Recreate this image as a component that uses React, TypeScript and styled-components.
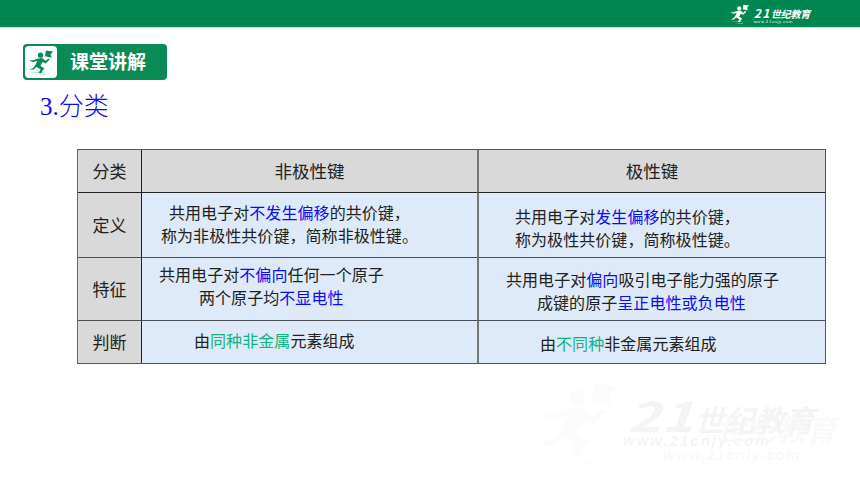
import React from 'react';
import styled, { createGlobalStyle } from 'styled-components';

const Global = createGlobalStyle`
  html, body { margin: 0; padding: 0; background: #fff; }
  body { font-family: "Noto Sans CJK SC", "Liberation Sans", sans-serif; }
`;
const Page = styled.div`
  position: relative; width: 860px; height: 484px; overflow: hidden; background: #fff;
  display: flex; flex-direction: column;
`;
const TopBar = styled.header`
  height: 27px; background: #008751; border-bottom: 1px solid #c4e2d4;
  display: flex; justify-content: flex-end; align-items: center; padding-right: 50px;
`;
const Brand = styled.div`display: flex; align-items: center; gap: 2px; color: #fff;`;
const BrandText = styled.div`display: flex; flex-direction: column; align-items: flex-start; padding-top: 3px;`;
const BrandName = styled.span`font: italic 700 10px/11px "Noto Sans CJK SC", sans-serif; letter-spacing: -.2px;`;
const BrandDigits = styled.span`font-size: 12px; letter-spacing: 1.5px;`;
const BrandUrl = styled.span`font: 700 4px/5px "Liberation Sans", sans-serif; letter-spacing: .55px; opacity: .7;`;
const Badge = styled.div`
  margin: 16px 0 0 23px; width: 144px; height: 36px; border-radius: 4px; background: #0a8a54;
  display: flex; align-items: center; box-sizing: border-box; padding-left: 2px;
`;
const BadgeIcon = styled.div`
  width: 32px; height: 32px; background: #fff; border-radius: 4px; display: flex; align-items: center; justify-content: center;
`;
const BadgeText = styled.span`
  margin: -2px 0 0 13px; color: #fff; font-size: 19px; line-height: 24px; font-weight: 700;
`;
const Title = styled.h1`
  margin: 8px 0 0 40px; color: #0a0af0; font: 400 25px/32px "Liberation Serif", "Noto Sans CJK SC", serif;
`;
const TitleCjk = styled.span`font-family: "Noto Sans CJK SC", sans-serif; font-weight: 300;`;
const Table = styled.div`
  margin: 26px 0 0 77px; width: 749px; height: 215px; box-sizing: border-box; position: relative; z-index: 1;
  display: grid; grid-template-columns: 63px 336px 1fr; grid-template-rows: 42px 65px 63px 1fr;
  border: 1px solid #555; border-left-color: #666;
  color: #222; font-size: 16px; line-height: 24px;
`;
const Cell = styled.div<{ $head?: boolean; $row: number; $col: number; $pl?: number; $pt?: number; $center?: boolean; $size?: number }>`
  box-sizing: border-box;
  background: ${p => (p.$head ? '#d9d9d9' : '#deeaf7')};
  border-top: ${p => (p.$row > 0 ? `1px solid ${p.$row === 1 ? '#222' : '#4a4f55'}` : 'none')};
  border-left: ${p => (p.$col === 1 ? '1px solid #222' : p.$col === 2 ? '2px solid #777' : 'none')};
  display: flex; flex-direction: column;
  justify-content: ${p => (p.$pt === undefined ? 'center' : 'flex-start')};
  padding-top: ${p => p.$pt ?? 0}px;
  padding-left: ${p => p.$pl ?? 0}px;
  align-items: ${p => (p.$center ? 'center' : 'flex-start')};
  font-size: ${p => p.$size ?? 16}px;
`;
const Line = styled.div<{ $indent?: number }>`
  padding-left: ${p => p.$indent ?? 0}px; white-space: nowrap; height: 23px; line-height: 23px; letter-spacing: .06px;
`;
const Blue = styled.span`color: #0c0cf4;`;
const Green = styled.span`color: #13b184;`;
const Watermark = styled.div`
  position: absolute; left: 530px; top: 372px; width: 330px; height: 100px; opacity: .06; filter: blur(.6px);
  color: #555; pointer-events: none;
`;
const WmName = styled.span`position: absolute; left: 97px; top: 22px; font: italic 700 30px/40px "Noto Sans CJK SC", sans-serif;`;
const WmDigits = styled.span`display: inline-block; font-size: 42px; transform: scaleX(1.35); transform-origin: left center; margin-right: 18px;`;
const WmNameBack = styled(WmName)`left: 186px; top: 36px; opacity: .55;`;
const WmUrl = styled.span`position: absolute; left: 93px; top: 60px; font: italic 700 15px/18px "Liberation Sans", sans-serif; letter-spacing: 2px;`;
const WmUrlBack = styled(WmUrl)`left: 133px; top: 74px; letter-spacing: 1.3px; opacity: .6;`;
const WmRunner = styled.div`position: absolute; left: 0; top: 0; opacity: .6;`;

const Runner: React.FC<{ size: number; color: string }> = ({ size, color }) => (
  <svg width={size} height={size} viewBox="0 0 32 32" fill="none">
    <circle cx="15" cy="8.5" r="2.7" fill={color} />
    <path d="M20.5 3.5l7.5 1.2-2.6 3 1.2 3.3-7-1.4z" fill={color} />
    <path d="M4 13.5c3 .8 5-.5 7.5-1.5l5-.6 3.7 2.8 3-2.4 1.3 1.1-4.2 4.2-3.2-1.5-2.2 4 4 2.4-4 5.5-1.7-1.2 2-3.4-4.5-2.2-2.6 2.5H3c3-.4 5-2 6.4-4.2l2.3-4.6-2 .6c-2 .7-4 .5-5.7-1z" fill={color} />
    <path d="M2 26.5l16-1v1zM8 29l12-.7v.9z" fill={color} opacity=".55" />
  </svg>
);

export default function App() {
  return (
    <Page>
      <Global />
      <TopBar>
        <Brand>
          <Runner size={24} color="#fff" />
          <BrandText>
            <BrandName><BrandDigits>21</BrandDigits>世纪教育</BrandName>
            <BrandUrl>www.21cnjy.com</BrandUrl>
          </BrandText>
        </Brand>
      </TopBar>
      <Badge>
        <BadgeIcon><Runner size={31} color="#0a8a54" /></BadgeIcon>
        <BadgeText>课堂讲解</BadgeText>
      </Badge>
      <Title>3.<TitleCjk>分类</TitleCjk></Title>
      <Table>
        <Cell $head $row={0} $col={0} $center $size={17}>分类</Cell>
        <Cell $head $row={0} $col={1} $center $size={17.5}>非极性键</Cell>
        <Cell $head $row={0} $col={2} $center $size={17.5}>极性键</Cell>

        <Cell $head $row={1} $col={0} $center $size={17}>定义</Cell>
        <Cell $row={1} $col={1} $pl={19} $pt={8}>
          <Line $indent={8}>共用电子对<Blue>不发生偏移</Blue>的共价键，</Line>
          <Line>称为非极性共价键，简称非极性键。</Line>
        </Cell>
        <Cell $row={1} $col={2} $pl={36} $pt={12}>
          <Line>共用电子对<Blue>发生偏移</Blue>的共价键，</Line>
          <Line>称为极性共价键，简称极性键。</Line>
        </Cell>

        <Cell $head $row={2} $col={0} $center $size={17}>特征</Cell>
        <Cell $row={2} $col={1} $pl={17} $pt={5}>
          <Line>共用电子对<Blue>不偏向</Blue>任何一个原子</Line>
          <Line $indent={40}>两个原子均<Blue>不显电性</Blue></Line>
        </Cell>
        <Cell $row={2} $col={2} $pl={27} $pt={10}>
          <Line>共用电子对<Blue>偏向</Blue>吸引电子能力强的原子</Line>
          <Line $indent={31}>成键的原子<Blue>呈正电性或负电性</Blue></Line>
        </Cell>

        <Cell $head $row={3} $col={0} $center $size={17}>判断</Cell>
        <Cell $row={3} $col={1} $pl={52} $pt={8}>
          <Line>由<Green>同种非金属</Green>元素组成</Line>
        </Cell>
        <Cell $row={3} $col={2} $pl={61} $pt={11}>
          <Line>由<Green>不同种</Green>非金属元素组成</Line>
        </Cell>
      </Table>
      <Watermark>
        <WmRunner><Runner size={100} color="#888" /></WmRunner>
        <WmNameBack>世纪教育</WmNameBack>
        <WmName><WmDigits>21</WmDigits>世纪教育</WmName>
        <WmUrlBack>www.21cnjy.com</WmUrlBack>
        <WmUrl>www.21cnjy.com</WmUrl>
      </Watermark>
    </Page>
  );
}
